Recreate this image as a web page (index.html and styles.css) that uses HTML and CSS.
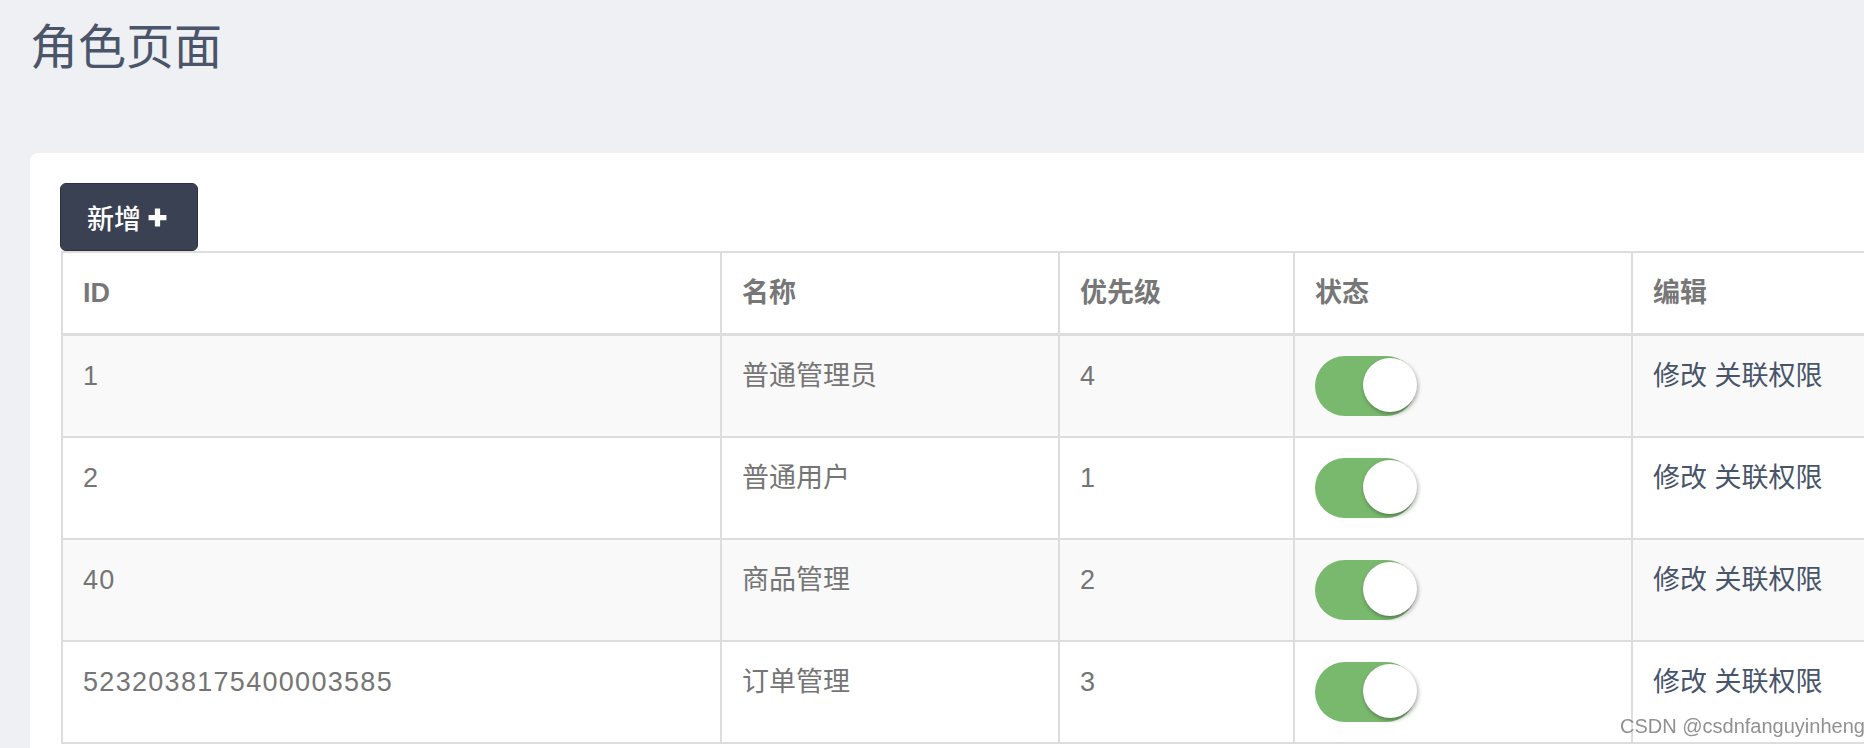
FILE: index.html
```html
<!DOCTYPE html>
<html lang="zh-CN">
<head>
<meta charset="utf-8">
<title>角色页面</title>
<link rel="stylesheet" href="styles.css">
</head>
<body>
<div class="page">
  <h1 class="title">角色页面</h1>
  <div class="card">
    <button class="btn-add">新增 <svg class="plus" viewBox="0 0 20 20" width="21" height="21"><path d="M7.5 1.5h5v6h6v5h-6v6h-5v-6h-6v-5h6z" fill="#fff"/></svg></button>
    <table class="grid">
      <colgroup>
        <col class="c-id"><col class="c-name"><col class="c-pri"><col class="c-state"><col class="c-edit">
      </colgroup>
      <thead>
        <tr><th>ID</th><th>名称</th><th>优先级</th><th>状态</th><th>编辑</th></tr>
      </thead>
      <tbody>
        <tr><td class="num">1</td><td>普通管理员</td><td class="num">4</td><td><span class="switch"><span class="knob"></span></span></td><td><span class="link">修改</span> <span class="link">关联权限</span></td></tr>
        <tr><td class="num">2</td><td>普通用户</td><td class="num">1</td><td><span class="switch"><span class="knob"></span></span></td><td><span class="link">修改</span> <span class="link">关联权限</span></td></tr>
        <tr><td class="num">40</td><td>商品管理</td><td class="num">2</td><td><span class="switch"><span class="knob"></span></span></td><td><span class="link">修改</span> <span class="link">关联权限</span></td></tr>
        <tr><td class="num">5232038175400003585</td><td>订单管理</td><td class="num">3</td><td><span class="switch"><span class="knob"></span></span></td><td><span class="link">修改</span> <span class="link">关联权限</span></td></tr>
      </tbody>
    </table>
  </div>
</div>
<div class="watermark">CSDN @csdnfanguyinheng</div>
</body>
</html>
```
FILE: styles.css
```css
html, body {
  margin: 0;
  padding: 0;
  overflow: hidden;
  background: #eef0f4;
  font-family: "Liberation Sans", "Noto Sans CJK SC", sans-serif;
}
body {
  width: 1864px;
  height: 748px;
}
.page {
  width: 1960px;
  height: 748px;
  overflow: hidden;
  padding: 10px 0 0 30px;
  box-sizing: border-box;
}
.title {
  margin: 0;
  font-size: 48px;
  line-height: 66px;
  font-weight: 400;
  color: #4b5569;
  font-family: "Noto Sans CJK SC", sans-serif;
}
.card {
  margin-top: 77px;
  background: #fff;
  border-radius: 8px;
  padding: 30px 0 0 30px;
  height: 640px;
  box-sizing: border-box;
}
.btn-add {
  display: flex;
  align-items: center;
  gap: 6px;
  height: 68px;
  width: 138px;
  padding: 0 0 0 26px;
  box-sizing: border-box;
  background: #3a4152;
  border: 1px solid #2b313e;
  border-radius: 6px;
  color: #fff;
  font-size: 27px;
  font-family: "Noto Sans CJK SC", sans-serif;
  font-weight: 500;
  cursor: pointer;
}
.plus { display: block; }
.grid {
  margin-left: 1px;
  width: 1900px;
  table-layout: fixed;
  border-collapse: collapse;
  border: 2px solid #dddddd;
  color: #757575;
  font-size: 27px;
}
.c-id { width: 659px; }
.c-name { width: 338px; }
.c-pri { width: 235px; }
.c-state { width: 338px; }
.grid th, .grid td {
  border: 2px solid #dddddd;
  padding: 20px 20px;
  line-height: 40px;
  text-align: left;
  vertical-align: top;
}
.grid th {
  font-weight: 700;
  color: #777;
  border-bottom: 3px solid #dddddd;
}
.grid td.num { letter-spacing: 1.3px; }
.grid tbody tr:nth-child(odd) td { background: #f9f9f9; }
.switch {
  position: relative;
  display: block;
  width: 101px;
  height: 60px;
  border-radius: 30px;
  background: #79b96d;
}
.knob {
  position: absolute;
  right: -1px;
  top: 2px;
  width: 54px;
  height: 54px;
  border-radius: 50%;
  background: #fff;
  box-shadow: 1px 2px 4px rgba(0,0,0,0.35);
}
.link { color: #475469; }
.watermark {
  position: fixed;
  left: 1620px;
  top: 714px;
  white-space: nowrap;
  font-size: 20px;
  line-height: 24px;
  color: rgba(125,125,125,0.85);
  text-shadow: 0 0 2px #fff;
  font-family: "Liberation Sans", sans-serif;
}
```
